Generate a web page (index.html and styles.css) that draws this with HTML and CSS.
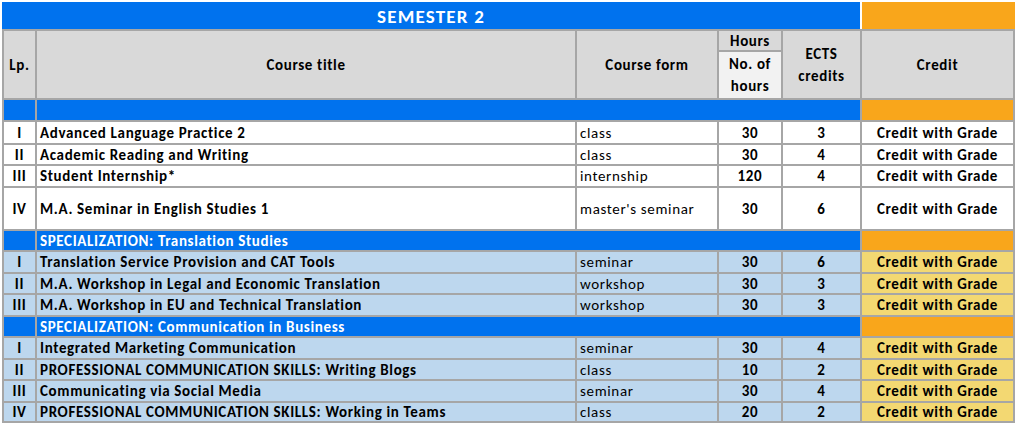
FILE: index.html
```html
<!DOCTYPE html>
<html lang="en">
<head>
<meta charset="utf-8">
<title>Semester 2</title>
<link rel="stylesheet" href="styles.css">
</head>
<body>
<div class="sheet">
  <div class="title-row">
    <div class="title-blue">SEMESTER 2</div>
    <div class="title-orange"></div>
  </div>
  <div class="grid">
    <div class="h lp span2">Lp.</div>
    <div class="h span2">Course title</div>
    <div class="h span2">Course form</div>
    <div class="h">Hours</div>
    <div class="h span2">ECTS<br>credits</div>
    <div class="h span2">Credit</div>
    <div class="h light">No. of<br>hours</div>

    <div class="blue"></div>
    <div class="blue wide"></div>
    <div class="orange"></div>

    <div class="c num">I</div>
    <div class="c t">Advanced Language Practice 2</div>
    <div class="c f">class</div>
    <div class="c num">30</div>
    <div class="c num">3</div>
    <div class="c num">Credit with Grade</div>

    <div class="c num">II</div>
    <div class="c t">Academic Reading and Writing</div>
    <div class="c f">class</div>
    <div class="c num">30</div>
    <div class="c num">4</div>
    <div class="c num">Credit with Grade</div>

    <div class="c num">III</div>
    <div class="c t">Student Internship*</div>
    <div class="c f">internship</div>
    <div class="c num">120</div>
    <div class="c num">4</div>
    <div class="c num">Credit with Grade</div>

    <div class="c num">IV</div>
    <div class="c t">M.A. Seminar in English Studies 1</div>
    <div class="c f">master's seminar</div>
    <div class="c num">30</div>
    <div class="c num">6</div>
    <div class="c num">Credit with Grade</div>

    <div class="blue"></div>
    <div class="blue wide spec">SPECIALIZATION: Translation Studies</div>
    <div class="orange"></div>

    <div class="c lb num">I</div>
    <div class="c lb t">Translation Service Provision and CAT Tools</div>
    <div class="c lb f">seminar</div>
    <div class="c lb num">30</div>
    <div class="c lb num">6</div>
    <div class="c yl num">Credit with Grade</div>

    <div class="c lb num">II</div>
    <div class="c lb t">M.A. Workshop in Legal and Economic Translation</div>
    <div class="c lb f">workshop</div>
    <div class="c lb num">30</div>
    <div class="c lb num">3</div>
    <div class="c yl num">Credit with Grade</div>

    <div class="c lb num">III</div>
    <div class="c lb t">M.A. Workshop in EU and Technical Translation</div>
    <div class="c lb f">workshop</div>
    <div class="c lb num">30</div>
    <div class="c lb num">3</div>
    <div class="c yl num">Credit with Grade</div>

    <div class="blue"></div>
    <div class="blue wide spec">SPECIALIZATION: Communication in Business</div>
    <div class="orange"></div>

    <div class="c lb num">I</div>
    <div class="c lb t">Integrated Marketing Communication</div>
    <div class="c lb f">seminar</div>
    <div class="c lb num">30</div>
    <div class="c lb num">4</div>
    <div class="c yl num">Credit with Grade</div>

    <div class="c lb num">II</div>
    <div class="c lb t">PROFESSIONAL COMMUNICATION SKILLS: Writing Blogs</div>
    <div class="c lb f">class</div>
    <div class="c lb num">10</div>
    <div class="c lb num">2</div>
    <div class="c yl num">Credit with Grade</div>

    <div class="c lb num">III</div>
    <div class="c lb t">Communicating via Social Media</div>
    <div class="c lb f">seminar</div>
    <div class="c lb num">30</div>
    <div class="c lb num">4</div>
    <div class="c yl num">Credit with Grade</div>

    <div class="c lb num">IV</div>
    <div class="c lb t">PROFESSIONAL COMMUNICATION SKILLS: Working in Teams</div>
    <div class="c lb f">class</div>
    <div class="c lb num">20</div>
    <div class="c lb num">2</div>
    <div class="c yl num">Credit with Grade</div>
  </div>
</div>
</body>
</html>
```
FILE: styles.css
```css
html, body {
  margin: 0;
  padding: 0;
  background: #ffffff;
}
body {
  font-family: "Carlito", "Lato", "Liberation Sans", sans-serif;
  font-size: 15px;
  letter-spacing: 0.65px;
  color: #000;
}
.sheet {
  margin: 2px 0 0 2px;
  width: 1013px;
}
.title-row {
  display: grid;
  grid-template-columns: 858px 153px;
  column-gap: 2px;
  height: 27px;
}
.title-blue {
  background: #0072ee;
  color: #fff;
  font-weight: bold;
  font-size: 19px;
  letter-spacing: 1.2px;
  display: flex;
  align-items: center;
  justify-content: center;
  padding-top: 1px;
}
.title-orange {
  background: #f9a61b;
}
.grid {
  display: grid;
  grid-template-columns: 31px 538px 140px 62px 77px 151px;
  grid-template-rows: 19px 46px 20px 21px 19px 20px 41px 19px 20px 19px 20px 19px 20px 19px 20px 18px;
  gap: 2px;
  padding: 2px;
  background: #a6a6a6;
}
.h {
  background: #d9d9d9;
  font-weight: bold;
  display: flex;
  align-items: center;
  justify-content: center;
  text-align: center;
  line-height: 22px;
}
.h.light {
  background: #f2f2f2;
}
.span2 {
  grid-row: span 2;
}
.blue {
  background: #0072ee;
}
.orange {
  background: #f9a61b;
}
.wide {
  grid-column: span 4;
}
.spec {
  color: #fff;
  font-weight: bold;
  display: flex;
  align-items: center;
  padding-left: 3px;
}
.c {
  background: #fff;
  display: flex;
  align-items: center;
  white-space: nowrap;
  overflow: hidden;
}
.c.lb {
  background: #bdd7ee;
}
.c.yl {
  background: #f3d872;
}
.t {
  font-weight: bold;
  padding-left: 3px;
}
.f {
  padding-left: 3px;
}
.num {
  font-weight: bold;
  justify-content: center;
}
```
